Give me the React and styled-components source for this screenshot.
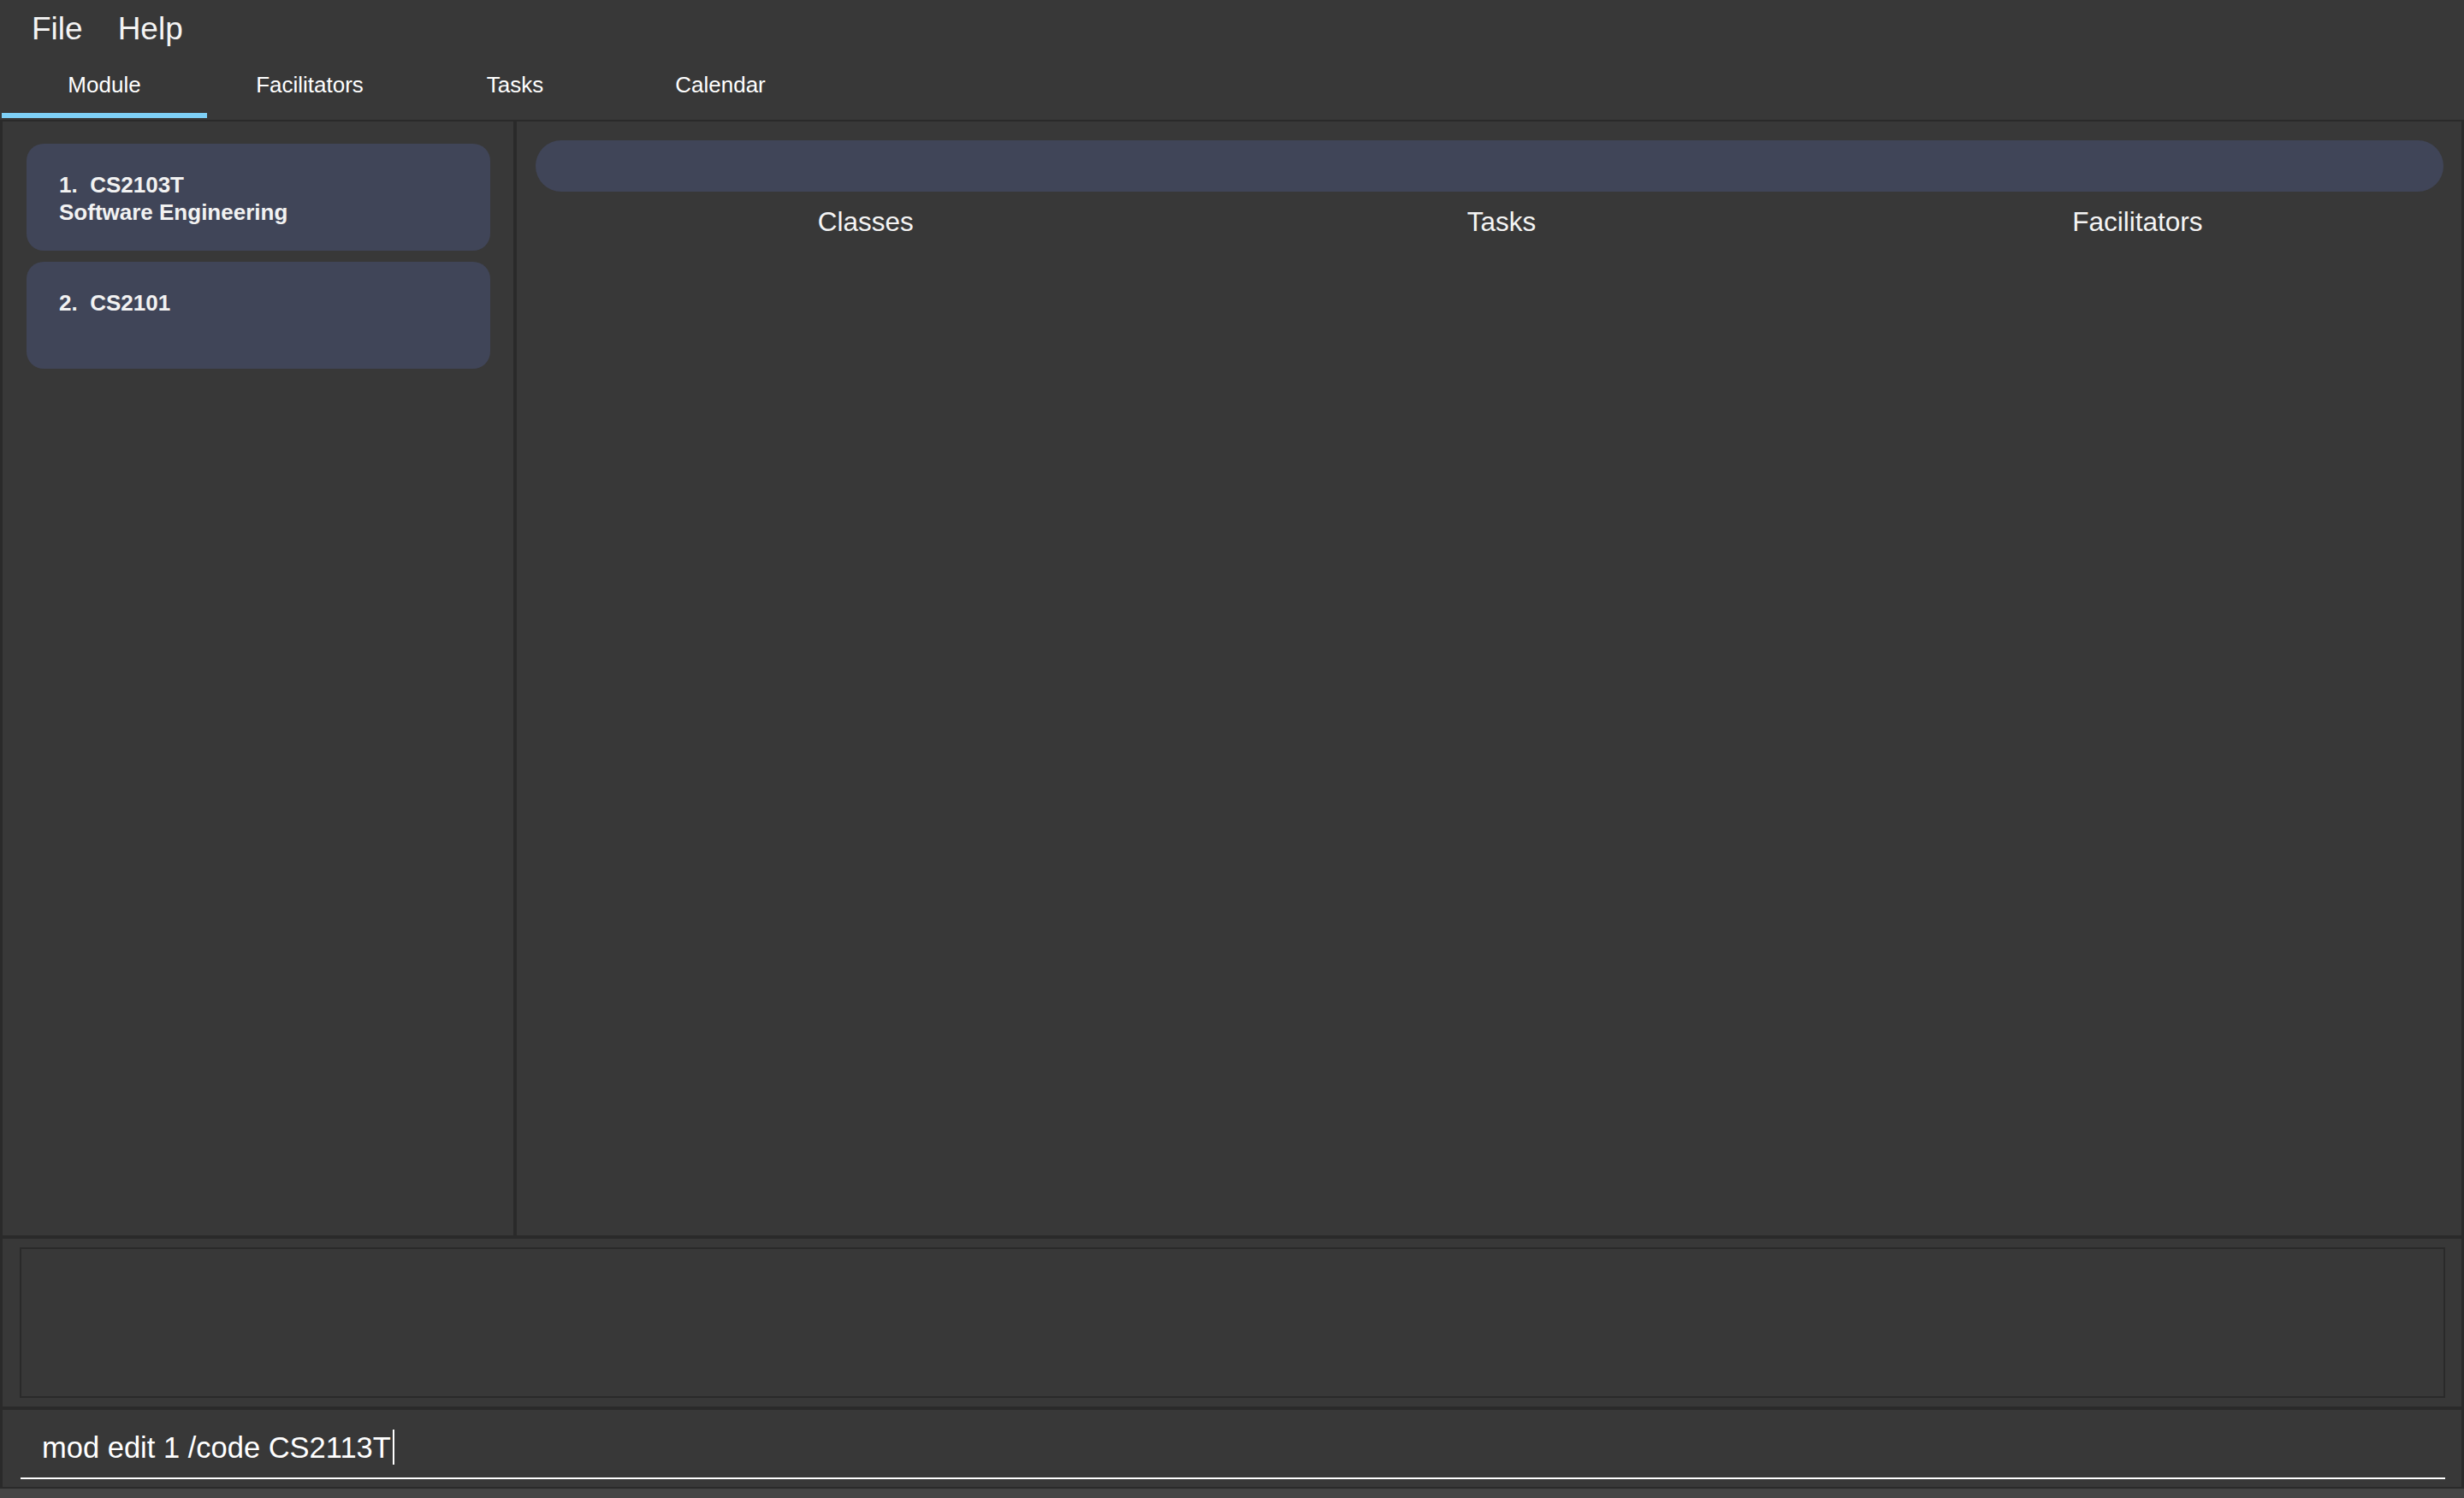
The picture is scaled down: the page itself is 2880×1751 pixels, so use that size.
import React from 'react'
import styled, { createGlobalStyle } from 'styled-components'

const modules = [
  { code: 'CS2103T', name: 'Software Engineering' },
  { code: 'CS2101', name: '' },
]

const tabs = ['Module', 'Facilitators', 'Tasks', 'Calendar']
const columns = ['Classes', 'Tasks', 'Facilitators']

function App() {
  return (
    <>
      <GlobalStyle />
      <Window>
        <MenuBar>
          <MenuItem>File</MenuItem>
          <MenuItem>Help</MenuItem>
        </MenuBar>
        <TabBar>
          {tabs.map((t, i) => (
            <Tab key={t} active={i === 0}>{t}</Tab>
          ))}
        </TabBar>
        <Main>
          <ListPanel>
            {modules.map((m, i) => (
              <Card key={m.code}>
                <CardLine>{i + 1}.&nbsp;&nbsp;{m.code}</CardLine>
                {m.name && <CardLine>{m.name}</CardLine>}
              </Card>
            ))}
          </ListPanel>
          <DetailPanel>
            <TitleBar />
            <ColumnRow>
              {columns.map((c) => (
                <ColumnTitle key={c}>{c}</ColumnTitle>
              ))}
            </ColumnRow>
          </DetailPanel>
        </Main>
        <ResultSection>
          <ResultBox />
        </ResultSection>
        <CommandSection>
          <CommandField>
            mod edit 1 /code CS2113T<Caret />
          </CommandField>
        </CommandSection>
        <StatusStrip />
      </Window>
    </>
  )
}

export default App

// ---- global
const GlobalStyle = createGlobalStyle`
  html, body {
    margin: 0;
    padding: 0;
    background: #383838;
  }
  * { box-sizing: border-box; }
`

// ---- window shell
const Window = styled.div`
  display: flex;
  flex-direction: column;
  width: 2880px;
  height: 1751px;
  background: #383838;
  color: #ffffff;
  font-family: "Liberation Sans", Arial, sans-serif;
  overflow: hidden;
`

// ---- menu
const MenuBar = styled.div`
  display: flex;
  gap: 41px;
  height: 55px;
  padding: 13px 0 0 37px;
`

const MenuItem = styled.span`
  font-size: 37px;
  line-height: 42px;
  color: #f4f4f4;
`

// ---- tabs
const TabBar = styled.div`
  display: flex;
  height: 87px;
  padding: 0 0 2px 2px;
  border-bottom: 2px solid #2a2a2a;
`

const Tab = styled.div`
  width: 240px;
  padding: 28px 0 17px;
  font-size: 26px;
  line-height: 32px;
  text-align: center;
  color: #ffffff;
  border-bottom: 6px solid ${(p) => (p.active ? '#7ed0f6' : 'transparent')};
`

// ---- main split
const Main = styled.div`
  flex: 1;
  display: flex;
  border-left: 3px solid #2a2a2a;
  border-right: 3px solid #2a2a2a;
  border-bottom: 4px solid #2a2a2a;
`

const ListPanel = styled.div`
  width: 601px;
  flex-shrink: 0;
  display: flex;
  flex-direction: column;
  gap: 13px;
  padding: 26px 27px 0 28px;
  border-right: 4px solid #2a2a2a;
`

const Card = styled.div`
  height: 125px;
  padding: 32px 38px 0;
  border-radius: 20px;
  background: #404558;
`

const CardLine = styled.div`
  font-size: 26px;
  font-weight: 700;
  line-height: 32px;
  color: #f2f2f2;
  white-space: pre;
`

const DetailPanel = styled.div`
  flex: 1;
  display: flex;
  flex-direction: column;
  padding: 22px 21px 0 22px;
`

const TitleBar = styled.div`
  height: 60px;
  border-radius: 30px;
  background: #404558;
`

const ColumnRow = styled.div`
  display: grid;
  grid-template-columns: repeat(3, 1fr);
  margin-top: 15px;
`

const ColumnTitle = styled.div`
  padding-left: 28px;
  text-align: center;
  font-size: 31.5px;
  line-height: 40px;
  color: #f4f4f4;
`

// ---- result display
const ResultSection = styled.div`
  height: 200px;
  padding: 10px 19px 10px 20px;
  border-left: 3px solid #2a2a2a;
  border-right: 3px solid #2a2a2a;
  border-bottom: 4px solid #2a2a2a;
`

const ResultBox = styled.div`
  height: 176px;
  border: 2px solid #2a2a2a;
  background: #383838;
`

// ---- command box
const CommandSection = styled.div`
  height: 92px;
  padding: 23px 19px 10px 21px;
  border-left: 3px solid #2a2a2a;
  border-right: 3px solid #2a2a2a;
  border-bottom: 2px solid #2a2a2a;
`

const CommandField = styled.div`
  display: flex;
  align-items: center;
  padding: 0 0 15px 25px;
  font-size: 34.5px;
  line-height: 40px;
  color: #ffffff;
  white-space: pre;
  border-bottom: 2px solid #ffffff;
`

const Caret = styled.span`
  display: inline-block;
  width: 2px;
  height: 41px;
  margin-left: 2px;
  background: #ffffff;
`

const StatusStrip = styled.div`
  height: 11px;
  background: #454545;
`
